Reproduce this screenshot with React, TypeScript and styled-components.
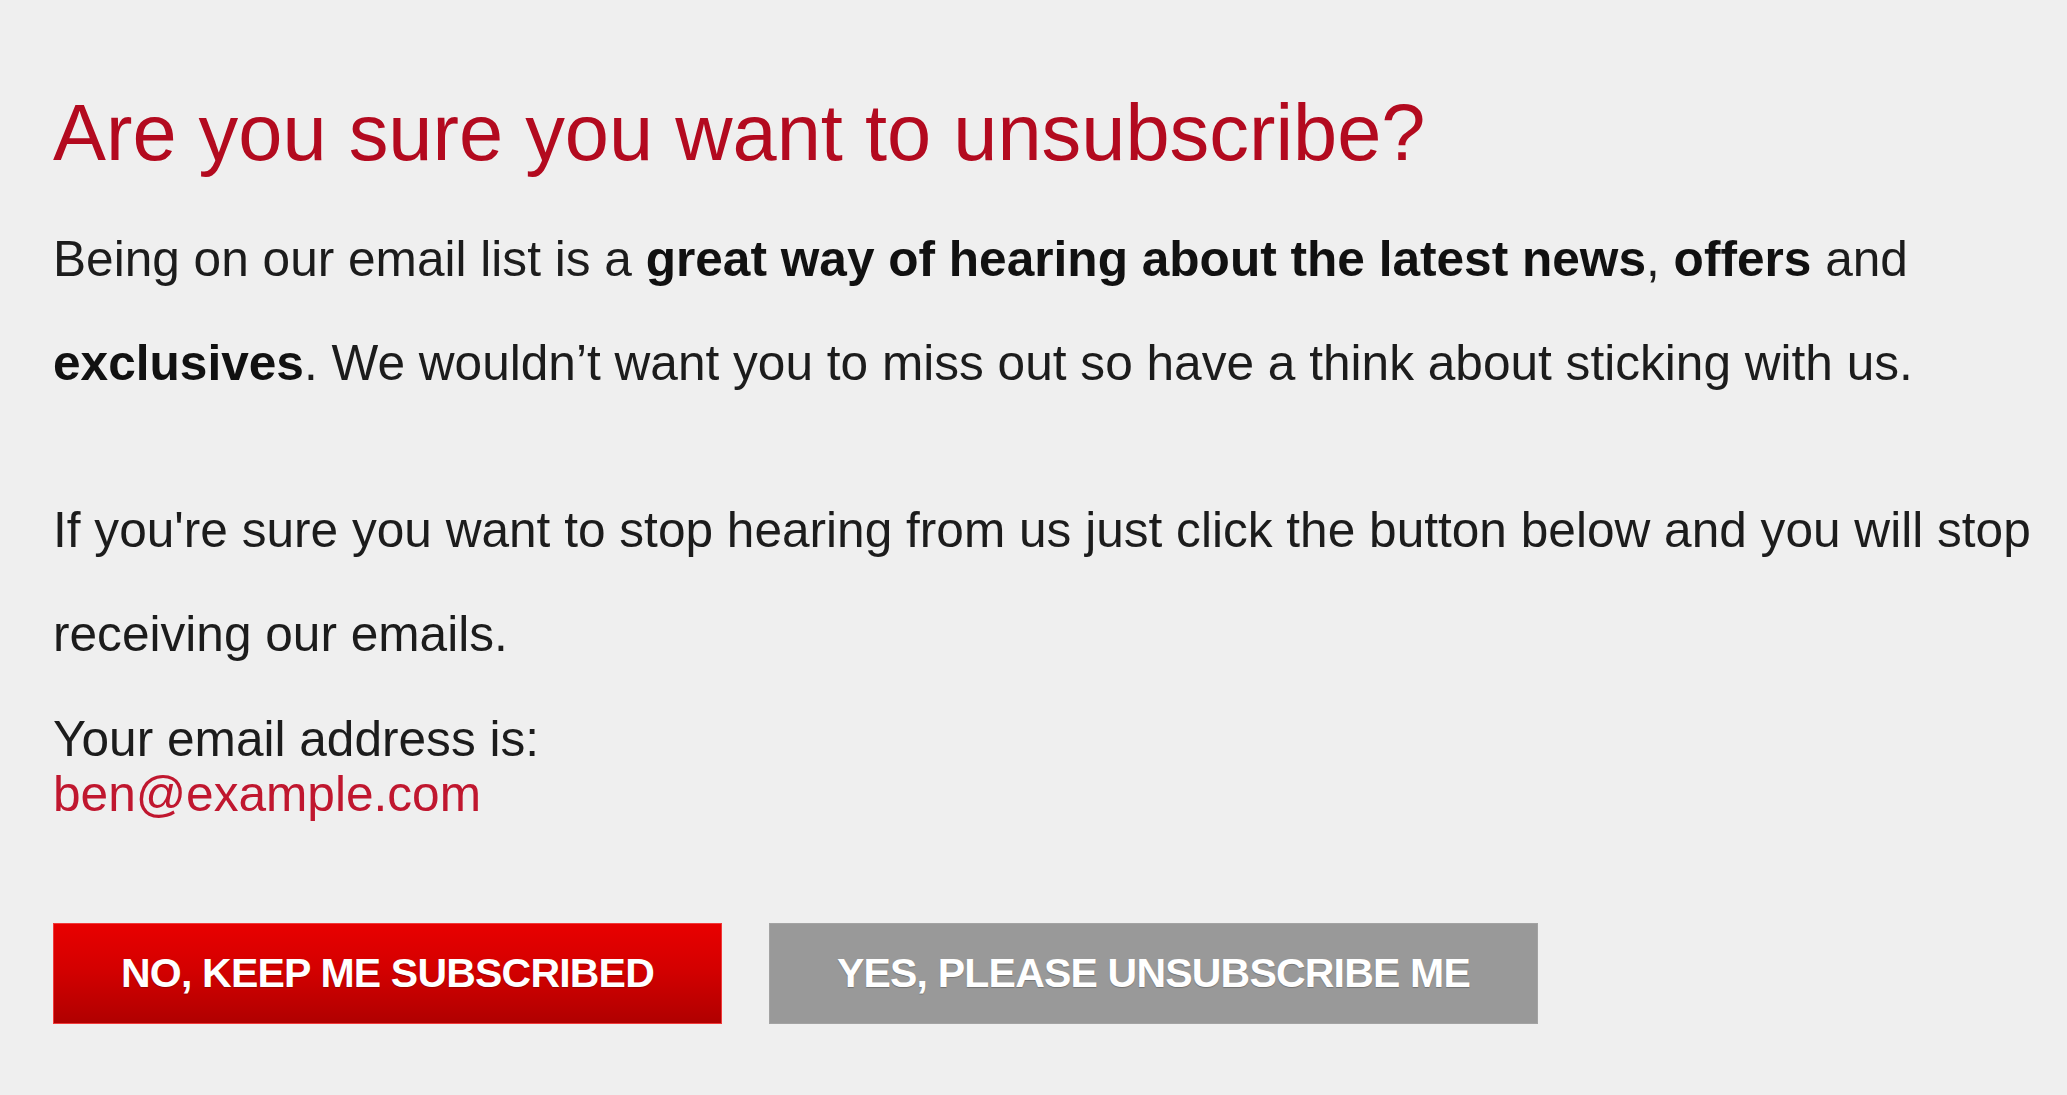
import React from "react";
import styled, { createGlobalStyle } from "styled-components";

const GlobalStyle = createGlobalStyle`
  html, body {
    margin: 0;
    padding: 0;
    background: #efefef;
  }
  body {
    font-family: "Liberation Sans", Arial, Helvetica, sans-serif;
    color: #1c1c1c;
  }
`;

const Page = styled.main`
  box-sizing: border-box;
  min-height: 1095px;
  padding: 93px 8px 0 53px;
  background: #efefef;
`;

const Heading = styled.h1`
  margin: 0;
  font-size: 79.4px;
  line-height: 79px;
  font-weight: 400;
  color: #b30a1f;
`;

const Paragraph = styled.p<{ $gap: number }>`
  margin: ${(p) => p.$gap}px 0 0;
  font-size: 49.6px;
  line-height: 104px;
  color: #1c1c1c;
`;

const Strong = styled.strong`
  font-weight: 700;
  color: #111;
`;

const EmailBlock = styled.div`
  margin-top: 26px;
  font-size: 49.6px;
  line-height: 55px;
  color: #1c1c1c;
`;

const EmailAddress = styled.div`
  color: #c0172f;
`;

const Actions = styled.div`
  display: flex;
  gap: 47px;
  margin-top: 101px;
`;

const Button = styled.button<{ $variant: "primary" | "secondary" }>`
  box-sizing: border-box;
  height: 101px;
  padding: 0 67px;
  border: 1px solid
    ${(p) => (p.$variant === "primary" ? "#f03a3a" : "#a3a3a3")};
  border-radius: 0;
  background: ${(p) =>
    p.$variant === "primary"
      ? "linear-gradient(to bottom, #e80000 0%, #d40000 45%, #b00000 100%)"
      : "#999999"};
  color: #ffffff;
  font-family: "Liberation Sans", Arial, Helvetica, sans-serif;
  font-size: 41px;
  font-weight: 700;
  letter-spacing: -0.8px;
  text-transform: uppercase;
  text-shadow: 0 1px 1px rgba(0, 0, 0, 0.25);
  cursor: pointer;
`;

export default function App() {
  return (
    <>
      <GlobalStyle />
      <Page>
        <Heading>Are you sure you want to unsubscribe?</Heading>
        <Paragraph $gap={35}>
          Being on our email list is a{" "}
          <Strong>great way of hearing about the latest news</Strong>,{" "}
          <Strong>offers</Strong> and <Strong>exclusives</Strong>. We
          wouldn’t want you to miss out so have a think about sticking with
          us.
        </Paragraph>
        <Paragraph $gap={63}>
          If you're sure you want to stop hearing from us just click the
          button below and you will stop receiving our emails.
        </Paragraph>
        <EmailBlock>
          <div>Your email address is:</div>
          <EmailAddress>ben@example.com</EmailAddress>
        </EmailBlock>
        <Actions>
          <Button $variant="primary">No, keep me subscribed</Button>
          <Button $variant="secondary">Yes, please unsubscribe me</Button>
        </Actions>
      </Page>
    </>
  );
}
